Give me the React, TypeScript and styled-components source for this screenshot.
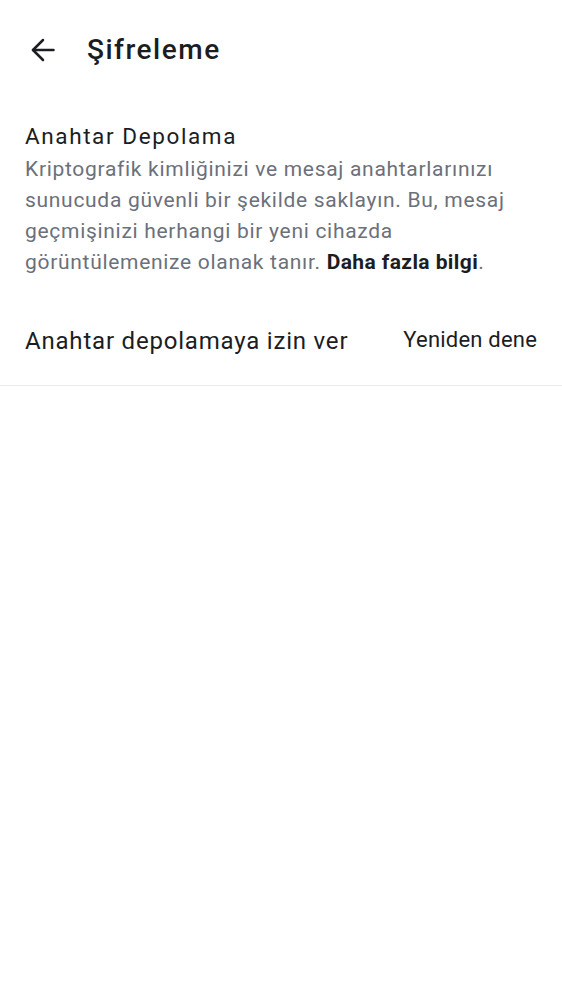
import React from "react";
import styled, { createGlobalStyle } from "styled-components";

const Global = createGlobalStyle`
  html, body { margin: 0; padding: 0; background: #fff; }
  body { font-family: Roboto, "Noto Sans", sans-serif; color: #1b1d22; }
`;

const Page = styled.div`
  width: 562px;
  display: flex;
  flex-direction: column;
`;

const Header = styled.header`
  display: flex;
  align-items: center;
  gap: 32px;
  height: 99px;
  padding: 0 0 0 31px;
  box-sizing: border-box;
`;

const BackButton = styled.button`
  display: flex;
  align-items: center;
  justify-content: center;
  width: 24px;
  height: 24px;
  padding: 0;
  margin-top: 1px;
  border: none;
  background: none;
  color: #1b1d22;
`;

const Title = styled.h1`
  margin: 0;
  font-size: 28px;
  font-weight: 500;
  line-height: 34px;
  letter-spacing: 1.5px;
`;

const Section = styled.section`
  padding: 22px 25px 0 25px;
`;

const SectionTitle = styled.h2`
  margin: 0;
  font-size: 22.5px;
  font-weight: 400;
  line-height: 31px;
  letter-spacing: 1.6px;
`;

const Description = styled.p`
  margin: 2px 0 0;
  font-size: 21px;
  line-height: 31px;
  letter-spacing: 0.7px;
  color: #6b707a;
`;

const Link = styled.a`
  color: #1b1d22;
  font-weight: 700;
  letter-spacing: 0.4px;
  text-decoration: none;
`;

const Row = styled.div`
  display: flex;
  align-items: center;
  justify-content: space-between;
  height: 88px;
  margin-top: 19px;
  padding: 0 25px;
  border-bottom: 1px solid #e9eaee;
`;

const RowLabel = styled.span`
  font-size: 24px;
  letter-spacing: 0.8px;
`;

const RowAction = styled.button`
  border: none;
  background: none;
  padding: 0;
  margin-top: -3px;
  font-family: inherit;
  font-size: 22px;
  letter-spacing: 0.2px;
  color: #1b1d22;
`;

export default function App() {
  return (
    <Page>
      <Global />
      <Header>
        <BackButton aria-label="Geri">
          <svg width="24" height="24" viewBox="0 0 24 24" fill="none" stroke="currentColor" strokeWidth="2.5" strokeLinecap="round" strokeLinejoin="round">
            <path d="M22.5 12H2" />
            <path d="M12 2L2 12L12 22" />
          </svg>
        </BackButton>
        <Title>Şifreleme</Title>
      </Header>
      <Section>
        <SectionTitle>Anahtar Depolama</SectionTitle>
        <Description>
          Kriptografik kimliğinizi ve mesaj anahtarlarınızı sunucuda güvenli bir şekilde saklayın. Bu, mesaj geçmişinizi herhangi bir yeni cihazda görüntülemenize olanak tanır. <Link href="#">Daha fazla bilgi</Link>.
        </Description>
      </Section>
      <Row>
        <RowLabel>Anahtar depolamaya izin ver</RowLabel>
        <RowAction>Yeniden dene</RowAction>
      </Row>
    </Page>
  );
}
